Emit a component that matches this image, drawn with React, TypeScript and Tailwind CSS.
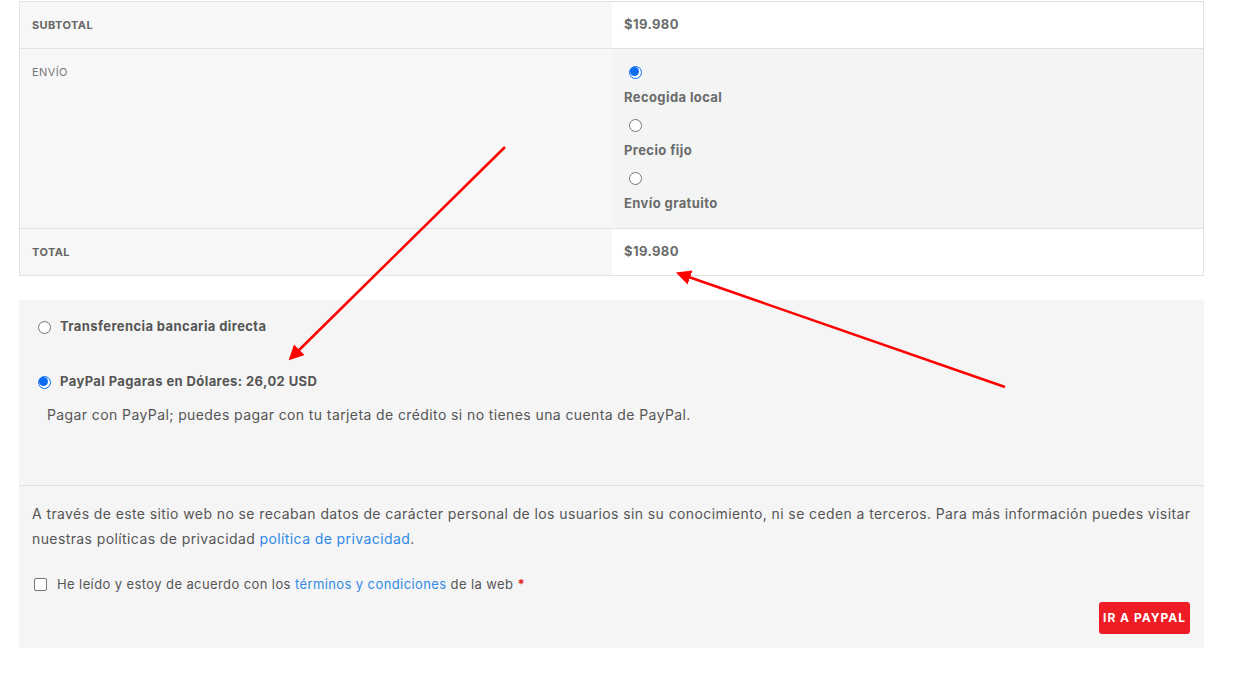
import React from "react";

const font = { fontFamily: "Inter, 'Noto Sans', sans-serif" };

function Radio({ checked }: { checked?: boolean }) {
  return checked ? (
    <span className="inline-block w-[13px] h-[13px] rounded-full border border-[#0a6cf5] bg-white flex items-center justify-center shrink-0">
      <span className="block w-[9px] h-[9px] rounded-full bg-[#0a6cf5]" />
    </span>
  ) : (
    <span className="inline-block w-[13px] h-[13px] rounded-full border border-[#767676] bg-white shrink-0" />
  );
}

export default function App() {
  return (
    <div className="relative w-[1257px] h-[688px] bg-white overflow-hidden tracking-[0.4px]" style={font}>
      <div className="ml-[19px] mr-[53px] pt-px">
        <div className="border border-[#e2e2e2]">
          <div className="grid grid-cols-[592px_1fr] border-b border-[#e2e2e2]">
            <div className="bg-[#f7f7f7] h-[46px] pl-[12px] flex items-center text-[11px] font-bold text-[#666] uppercase">Subtotal</div>
            <div className="bg-white pl-[12px] flex items-center text-[13px] font-bold text-[#6b6b6b]">$19.980</div>
          </div>
          <div className="grid grid-cols-[592px_1fr] border-b border-[#e2e2e2]">
            <div className="bg-[#f7f7f7] pl-[12px] pt-[15px] text-[11px] text-[#777] uppercase">Envío</div>
            <div className="bg-[#f3f4f4] pl-[12px] pt-[15px] pb-[7px] flex flex-col gap-[2px]">
              {[
                ["Recogida local", true],
                ["Precio fijo", false],
                ["Envío gratuito", false],
              ].map(([label, c]) => (
                <div key={label as string} className="flex flex-col">
                  <div className="h-[16px] flex items-center pl-[5px]">
                    <Radio checked={c as boolean} />
                  </div>
                  <div className="h-[35px] flex items-center text-[13px] font-bold text-[#6b6b6b]">{label as string}</div>
                </div>
              ))}
            </div>
          </div>
          <div className="grid grid-cols-[592px_1fr]">
            <div className="bg-[#f7f7f7] h-[46px] pl-[12px] flex items-center text-[11px] font-bold text-[#666] uppercase">Total</div>
            <div className="bg-white pl-[12px] flex items-center text-[13px] font-bold text-[#6b6b6b]">$19.980</div>
          </div>
        </div>

        <div className="mt-[24px] bg-[#f5f5f5] h-[348px] flex flex-col">
          <div className="h-[186px] border-b border-[#e2e2e2] pt-[19px] pl-[19px]">
            <div className="flex items-center gap-[9px] h-[16px]">
              <Radio />
              <span className="text-[13px] font-bold text-[#555]">Transferencia bancaria directa</span>
            </div>
            <div className="flex items-center gap-[9px] h-[16px] mt-[39px]">
              <Radio checked />
              <span className="text-[13px] font-bold text-[#555]">PayPal Pagaras en Dólares: 26,02 USD</span>
            </div>
            <div className="mt-[14px] pl-[9px] text-[14px] text-[#555]">
              Pagar con PayPal; puedes pagar con tu tarjeta de crédito si no tienes una cuenta de PayPal.
            </div>
          </div>
          <p className="px-[13px] pt-[15px] text-[14px] leading-[25px] text-[#555]">
            A través de este sitio web no se recaban datos de carácter personal de los usuarios sin su conocimiento, ni se ceden a terceros. Para más información puedes visitar nuestras políticas de privacidad <span className="text-[#2f8ae5]">política de privacidad</span>.
          </p>
          <div className="mt-[24px] pl-[15px] flex items-center gap-[10px] text-[13px] text-[#555]">
            <span className="inline-block w-[13px] h-[13px] rounded-[2px] border border-[#767676] bg-white" />
            <span>
              He leído y estoy de acuerdo con los <span className="text-[#2f8ae5]">términos y condiciones</span> de la web <span className="text-[#e2231a] font-bold">*</span>
            </span>
          </div>
          <div className="flex justify-end pr-[14px] mt-[7px]">
            <button className="h-[32px] px-[4px] rounded-[3px] bg-[#ee1c25] text-white text-[12px] font-bold tracking-[1px]">
              IR A PAYPAL
            </button>
          </div>
        </div>
      </div>

      <svg className="absolute inset-0 pointer-events-none" width="1257" height="688">
        <defs>
          <marker id="ah" markerWidth="6" markerHeight="6" refX="3" refY="3" orient="auto" markerUnits="strokeWidth">
            <path d="M0,0 L6,3 L0,6 Z" fill="#f00" />
          </marker>
        </defs>
        <line x1="505" y1="147" x2="294" y2="355" stroke="#f00" strokeWidth="2.5" markerEnd="url(#ah)" />
        <line x1="1005" y1="387" x2="683" y2="275" stroke="#f00" strokeWidth="2.5" markerEnd="url(#ah)" />
      </svg>
    </div>
  );
}
